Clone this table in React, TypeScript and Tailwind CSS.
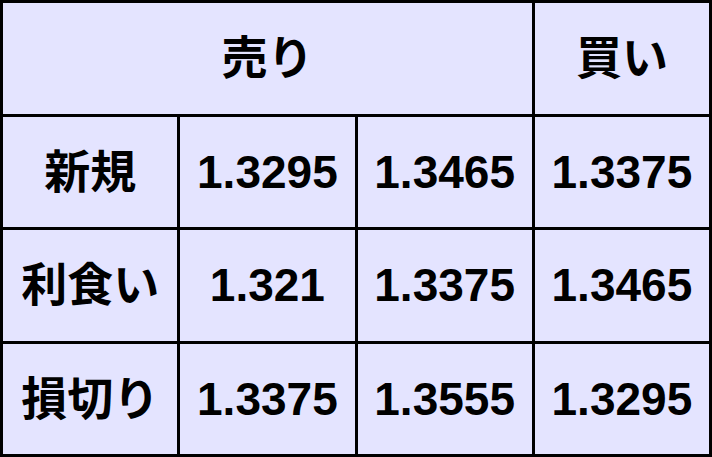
import { Fragment } from "react";

const ROWS = [
  { label: "新規", values: ["1.3295", "1.3465", "1.3375"] },
  { label: "利食い", values: ["1.321", "1.3375", "1.3465"] },
  { label: "損切り", values: ["1.3375", "1.3555", "1.3295"] },
];

const font = {
  fontFamily: '"Liberation Sans", Arial, "Noto Sans CJK JP", sans-serif',
};

function Cell({ children, className = "" }: { children: React.ReactNode; className?: string }) {
  return (
    <div
      className={`flex items-center justify-center bg-[#e4e4ff] text-[46px] font-bold leading-none text-black ${className}`}
    >
      {children}
    </div>
  );
}

export default function App() {
  return (
    <div
      className="grid h-[457px] w-[712px] grid-cols-4 grid-rows-4 gap-[3px] bg-black p-[3px]"
      style={font}
    >
      <Cell className="col-span-3">売り</Cell>
      <Cell>買い</Cell>
      {ROWS.map((row) => (
        <Fragment key={row.label}>
          <Cell>{row.label}</Cell>
          {row.values.map((v, i) => (
            <Cell key={i}>{v}</Cell>
          ))}
        </Fragment>
      ))}
    </div>
  );
}
